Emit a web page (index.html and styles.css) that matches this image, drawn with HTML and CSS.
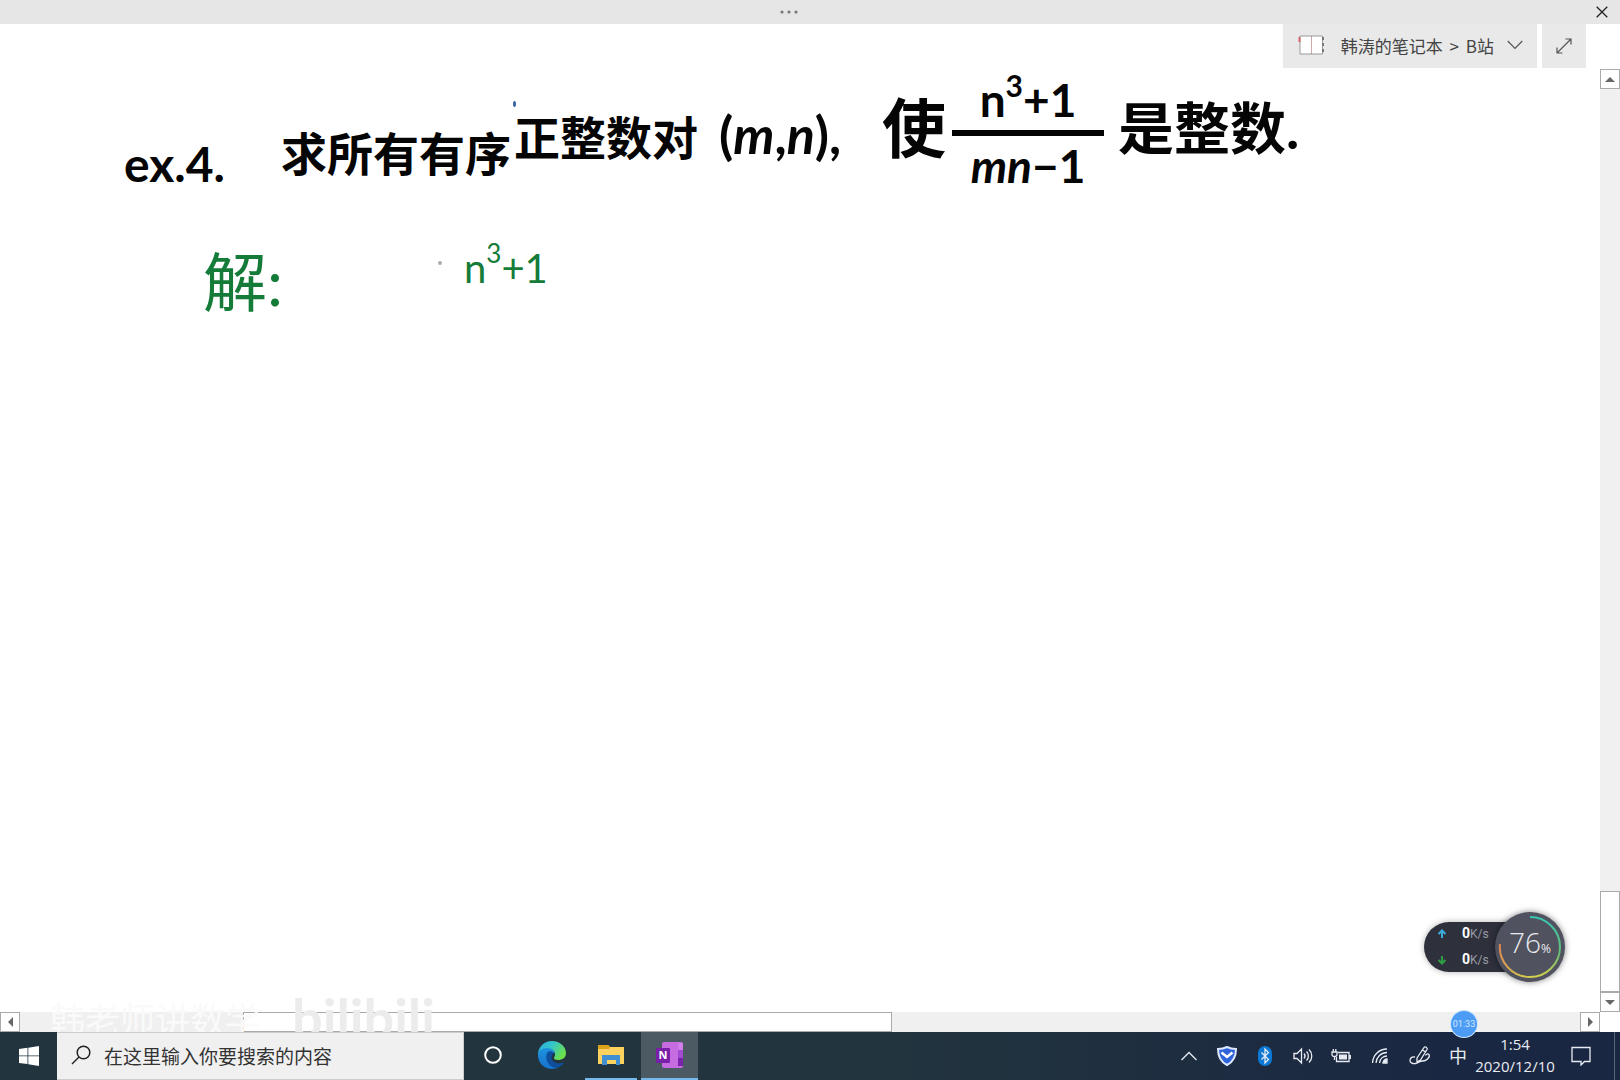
FILE: index.html
```html
<!DOCTYPE html>
<html lang="zh-CN">
<head>
    <meta charset="UTF-8">
    <meta name="viewport" content="width=device-width, initial-scale=1.0">
    <title>B站 - OneNote</title>
    <link rel="stylesheet" href="styles.css">
</head>
<body>
    <header class="titlebar">
        <button class="more" aria-label="更多">
            <svg width="20" height="4" viewBox="0 0 20 4"><circle cx="3" cy="2" r="1.6"/><circle cx="10" cy="2" r="1.6"/><circle cx="17" cy="2" r="1.6"/></svg>
        </button>
        <button class="close" aria-label="关闭">
            <svg width="12" height="12" viewBox="0 0 12 12"><path d="M.7.7l10.6 10.6M11.3.7L.7 11.3"/></svg>
        </button>
    </header>

    <main class="workspace">
        <section class="page">
            <nav class="page-nav">
                <button class="crumbs">
                    <svg class="book" width="28" height="22" viewBox="0 0 28 22">
                        <path d="M2 2h11.500v18H2z M13.500 2h11v18h-11z" fill="#fff" stroke="#999"/>
                        <path d="M1.500 3v5" stroke="#d9666a" stroke-width="2"/>
                        <path d="M13.500 3v16" stroke="#d3a9ac"/>
                        <path d="M25 3v3M25 9v3M25 15v3" stroke="#777" stroke-width="2"/>
                    </svg>
                    <span class="path">韩涛的笔记本 <span class="sep">&gt;</span> B站</span>
                    <svg width="16" height="10" viewBox="0 0 16 10"><path d="M.7 1l7.300 7.500L15.300 1" fill="none" stroke="#555" stroke-width="1.2"/></svg>
                </button>
                <button class="expand" aria-label="全屏">
                    <svg width="16" height="16" viewBox="0 0 16 16"><path d="M1 15L15 1M9.500 1H15v5.500M1 9.500V15h5.500" fill="none" stroke="#555" stroke-width="1.2"/></svg>
                </button>
            </nav>

            <!-- handwriting on the free canvas -->
            <div class="ink label">ex.4.</div>
            <div class="ink find">求所有有序</div>
            <div class="ink pair">正整数对</div>
            <div class="ink tuple">(<i>m</i>,<i>n</i>),</div>
            <div class="ink such">使</div>
            <div class="ink fraction">
                <span class="top">n<sup>3</sup>+1</span>
                <span class="bottom"><i>mn</i>−1</span>
            </div>
            <div class="ink integer">是整数.</div>
            <div class="ink green solve">解:</div>
            <div class="ink green cube">n<sup>3</sup>+1</div>
            <span class="dot blue"></span>
            <span class="dot grey"></span>

            <aside class="monitor">
                <dl class="speeds">
                    <div>
                        <dt><svg width="10" height="10" viewBox="0 0 10 10"><path d="M5 9V2M1.500 5L5 1.500 8.500 5" fill="none" stroke="#3cabdc" stroke-width="2"/></svg></dt>
                        <dd><b>0</b>K/s</dd>
                    </div>
                    <div>
                        <dt><svg width="10" height="10" viewBox="0 0 10 10"><path d="M5 1v7M1.500 5L5 8.500 8.500 5" fill="none" stroke="#2f9e44" stroke-width="2"/></svg></dt>
                        <dd><b>0</b>K/s</dd>
                    </div>
                </dl>
                <div class="gauge">
                    <svg class="ring" viewBox="0 0 70 70">
                        <defs>
                            <linearGradient id="ring" x1="0" y1="0" x2="0" y2="1">
                                <stop offset="0" stop-color="#35c8b4"/>
                                <stop offset=".6" stop-color="#67bd77"/>
                                <stop offset="1" stop-color="#d3cd4d"/>
                            </linearGradient>
                            <linearGradient id="ring-end" x1="0" y1="0" x2="1" y2="1">
                                <stop offset="0" stop-color="#de8451"/>
                                <stop offset="1" stop-color="#d3cd4d"/>
                            </linearGradient>
                        </defs>
                        <path d="M35 5a30 30 0 0 1 0 60" fill="none" stroke="url(#ring)" stroke-width="2"/>
                        <path d="M35 65A30 30 0 0 1 5 32" fill="none" stroke="url(#ring-end)" stroke-width="2"/>
                    </svg>
                    <span>76<small>%</small></span>
                </div>
            </aside>
        </section>

        <div class="scroll-v">
            <button aria-label="向上滚动"><svg width="10" height="5" viewBox="0 0 10 5"><path d="M0 5l5-5 5 5z"/></svg></button>
            <div class="track"><div class="thumb"></div></div>
            <button aria-label="向下滚动"><svg width="10" height="5" viewBox="0 0 10 5"><path d="M0 0h10L5 5z"/></svg></button>
        </div>
        <div class="scroll-h">
            <button aria-label="向左滚动"><svg width="5" height="10" viewBox="0 0 5 10"><path d="M5 0v10L0 5z"/></svg></button>
            <div class="track"><div class="thumb"></div></div>
            <button aria-label="向右滚动"><svg width="5" height="10" viewBox="0 0 5 10"><path d="M0 0l5 5-5 5z"/></svg></button>
            <span class="timer">01:33</span>
            <div class="watermark"><span>韩老师讲数学</span><b>bilibili</b></div>
        </div>
    </main>

    <footer class="taskbar">
        <button class="start" aria-label="开始">
            <svg width="20" height="20" viewBox="0 0 20 20" fill="#fff"><path d="M0 3l8.500-1.200v7.700H0zM9.300 1.700L20 0v9.500H9.300zM0 10.300h8.500V18L0 16.900zM9.300 10.300H20V20L9.300 18.200z"/></svg>
        </button>
        <label class="search">
            <svg width="20" height="20" viewBox="0 0 20 20" fill="none" stroke="#222" stroke-width="1.5"><circle cx="12.500" cy="7.500" r="6.300"/><path d="M8 12L1 19"/></svg>
            <input type="text" placeholder="在这里输入你要搜索的内容" aria-label="搜索">
        </label>
        <div class="apps">
            <button class="app" aria-label="Cortana">
                <svg width="20" height="20" viewBox="0 0 20 20"><circle cx="10" cy="10" r="7.800" fill="none" stroke="#fff" stroke-width="2"/></svg>
            </button>
            <button class="app" aria-label="Edge">
                <svg width="30" height="30" viewBox="0 0 30 30">
                    <defs>
                        <linearGradient id="edge-top" x1="0" y1="0" x2="1" y2=".5"><stop offset="0" stop-color="#2aa8e4"/><stop offset=".5" stop-color="#35c6c8"/><stop offset="1" stop-color="#6be04c"/></linearGradient>
                        <linearGradient id="edge-body" x1="0" y1="0" x2="0" y2="1"><stop offset="0" stop-color="#1e93df"/><stop offset="1" stop-color="#1671cb"/></linearGradient>
                    </defs>
                    <path d="M1 15C1 7 7 1 15 1c8 0 14 6 14 12 0 5-4 7-8 7-3 0-4-1-4-2 0-1 1-1 1-4 0-3-3-5-7-5-5 0-9 3-10 6z" fill="url(#edge-top)"/>
                    <path d="M1 15c0-4 4-7 9-7 5 0 8 3 8 6 0-2-6-2-7 3-1 6 5 11 12 9-2 2-5 3-8 3C7 29 1 23 1 15z" fill="url(#edge-body)"/>
                    <path d="M10.500 12C7 18 11 27 19 28c4-1 7-3 8.500-6-5 3-12 1-13-4 0-2 1-4 2.500-5-2-2-5-2-6.500-1z" fill="#0d4f9c"/>
                </svg>
            </button>
            <button class="app open" aria-label="文件资源管理器">
                <svg width="26" height="22" viewBox="0 0 26 22">
                    <path d="M0 1h10l2 2h14v17H0z" fill="#fbd25f"/>
                    <path d="M0 1h10l2 2-1 2H0z" fill="#dda21b"/>
                    <path d="M4 21V11h18v10h-4v-5h-9v5z" fill="#3f8fd2"/>
                    <path d="M9 16h8v4H9z" fill="#fbd25f"/>
                </svg>
            </button>
            <button class="app open active" aria-label="OneNote">
                <svg width="28" height="26" viewBox="0 0 28 26">
                    <rect x="6" y="0" width="21" height="26" rx="2" fill="#c66be0"/>
                    <path d="M22 1h5v7h-5z" fill="#cf7de8"/><path d="M22 8h5v8h-5z" fill="#a34ad0"/><path d="M22 16h5v8h-5z" fill="#7b22ad"/>
                    <rect x="0" y="6" width="14" height="15" rx="1" fill="#7a1fa8"/>
                    <text class="note-mark" x="7" y="17" text-anchor="middle">N</text>
                </svg>
            </button>
        </div>

        <div class="tray">
            <button aria-label="显示隐藏的图标"><svg width="18" height="10" viewBox="0 0 18 10"><path d="M1.500 9L9 1.500 16.500 9"/></svg></button>
            <button aria-label="安全卫士"><svg width="20" height="20" viewBox="0 0 20 20"><path d="M10 1c3 1.500 6 2 9 2 0 7-3 13-9 16C4 16 1 10 1 3c3 0 6-.5 9-2z" fill="#2f63dc" stroke="#dde8ff" stroke-width="2"/><path d="M4.500 6.500L10 11l5.500-4.500" stroke="#fff" stroke-width="2.500"/></svg></button>
            <button aria-label="蓝牙"><svg width="14" height="20" viewBox="0 0 14 20"><rect width="14" height="20" rx="7" fill="#0c78d4" stroke="none"/><path d="M3.500 6.500l7 7L7 17V3l3.500 3.500-7 7"/></svg></button>
            <button aria-label="音量"><svg width="20" height="18" viewBox="0 0 20 18"><path d="M1 6.500h3L8.500 2v14L4 11.500H1zM11 6.500c1.300 1.500 1.300 3.500 0 5M13.500 4.500c2.500 2.500 2.500 6.500 0 9M16 2.500c3.700 3.500 3.700 9.500 0 13"/></svg></button>
            <button aria-label="电池"><svg width="20" height="16" viewBox="0 0 20 16"><path d="M7 4.500h11v9H5.500V9M19.300 7v4"/><path d="M8 6.500h8v5H8z" fill="#e8ecf2" stroke="none"/><path d="M1 4h5v2.500C6 8 5 8.500 3.500 8.500S1 8 1 6.500zM2.300 4V1M4.800 4V1M3.500 8.500V12"/></svg></button>
            <button class="wide" aria-label="网络"><svg width="18" height="18" viewBox="0 0 18 18"><path d="M1.500 16C2 8 8 2 16 2M5 16c.5-6 5-10.500 11-10.500M8.500 16c.5-4 3.500-7 7.500-7"/><path d="M12 16c0-2 2-4 4-4v4z" fill="#e8ecf2"/></svg></button>
            <button class="wide" aria-label="笔工作区"><svg width="22" height="22" viewBox="0 0 22 22"><path d="M8 13L15 2.500c1-1.500 4 0 3 2L11.500 15 8 17zM13.500 5l3 2M6 12c-3-.5-5 1-5 3.500s3 3.500 5.500 3 4-2.500 7-2.500c4 0 8-4 6.500-6.500-1-1-3-.5-3.500 1"/></svg></button>
            <button class="ime" aria-label="输入法">中</button>
            <button class="clock"><time>1:54</time><span>2020/12/10</span></button>
            <button class="notice" aria-label="通知"><svg width="20" height="20" viewBox="0 0 20 20"><path d="M1 1.500h18v14h-5.500L10 19v-3.500H1z"/></svg></button>
        </div>
    </footer>
</body>
</html>
```
FILE: styles.css
```css
* {
    box-sizing: border-box;
}
body {
    margin: 0;
    height: 100vh;
    display: flex;
    flex-direction: column;
    overflow: hidden;
    background-color: #fff;
    font-family: "Noto Sans CJK SC", sans-serif;
    color: #444;
}
button {
    display: flex;
    align-items: center;
    justify-content: center;
    padding: 0;
    border: none;
    background: none;
    color: inherit;
    font: inherit;
}
svg {
    display: block;
    flex-shrink: 0;
}
.titlebar {
    display: grid;
    grid-template-columns: 36px 1fr 36px;
    height: 24px;
    background-color: #e6e6e6;
}
.more {
    grid-column: 2;
    justify-self: center;
    margin-right: 42px;
    fill: #777;
}
.close {
    stroke: #222;
    stroke-width: 1.3;
}
.workspace {
    flex: 1;
    min-height: 0;
    display: grid;
    grid-template-columns: 1fr 20px;
    grid-template-rows: 1fr 20px;
}
.page {
    position: relative;
}
.page-nav {
    position: absolute;
    top: 0;
    right: 14px;
    display: flex;
    gap: 5px;
    height: 44px;
}
.page-nav button {
    background-color: #e9e9e9;
}
.crumbs {
    padding: 0 14px 2px 15px;
    font-size: 17px;
}
.path {
    margin: 0 13px 0 15px;
}
.sep {
    margin: 0 3px;
}
.book {
    fill: none;
}
.page-nav .expand {
    width: 44px;
}

/* handwriting */
.ink {
    position: absolute;
    color: #050505;
    font-family: Lato, "Noto Sans CJK SC", sans-serif;
    font-weight: 700;
    font-size: 46px;
    line-height: 60px;
    white-space: nowrap;
}
.ink sup {
    font-size: 30px;
    line-height: 0;
    vertical-align: 20px;
}
.label {
    left: 124px;
    top: 110px;
    font-size: 48px;
}
.find {
    left: 281px;
    top: 100px;
}
.pair {
    left: 514px;
    top: 84px;
}
.tuple {
    left: 719px;
    top: 80px;
    font-size: 52px;
}
.such {
    left: 882px;
    top: 74px;
    font-size: 64px;
}
.fraction {
    left: 952px;
    top: 46px;
    width: 152px;
    display: flex;
    flex-direction: column;
    text-align: center;
}
.fraction .top {
    border-bottom: 6px solid #050505;
}
.fraction .bottom {
    line-height: 60px;
}
.integer {
    left: 1118px;
    top: 74px;
    font-size: 56px;
}
.green {
    color: #147c38;
    font-weight: 400;
}
.solve {
    left: 203px;
    top: 228px;
    font-size: 64px;
}
.cube {
    left: 464px;
    top: 214px;
    font-size: 40px;
}
.cube sup {
    font-size: 26px;
}
.dot {
    position: absolute;
    border-radius: 50%;
}
.dot.blue {
    left: 513px;
    top: 77px;
    width: 3px;
    height: 6px;
    background-color: #3a64a8;
}
.dot.grey {
    left: 438px;
    top: 237px;
    width: 4px;
    height: 4px;
    background-color: #aaa;
}

/* network speed widget */
.monitor {
    position: absolute;
    right: 35px;
    bottom: 30px;
    display: flex;
    align-items: center;
}
.speeds {
    width: 90px;
    height: 50px;
    margin: 0 -19px 0 0;
    padding: 0 0 0 13px;
    display: flex;
    flex-direction: column;
    justify-content: center;
    background-color: #2e303c;
    border-radius: 25px 0 0 25px;
    box-shadow: 0 0 6px rgba(0, 0, 0, 0.3);
    color: #9a9ca5;
    font-family: Roboto, sans-serif;
    font-size: 12px;
    line-height: 25px;
}
.speeds div {
    display: flex;
    align-items: center;
    gap: 15px;
}
.speeds dd {
    margin: 0;
}
.speeds b {
    color: #fff;
    font-size: 14px;
}
.gauge {
    position: relative;
    width: 70px;
    height: 70px;
    display: flex;
    align-items: center;
    justify-content: center;
    border-radius: 50%;
    background-color: #50535f;
    box-shadow: 0 0 6px rgba(0, 0, 0, 0.5);
    color: #e8e9ee;
    font-family: "Open Sans", sans-serif;
    font-weight: 300;
    font-size: 28px;
    line-height: 34px;
    padding-bottom: 4px;
}
.gauge small {
    font-size: 12px;
    font-weight: 400;
}
.ring {
    position: absolute;
    inset: 0;
}

/* scrollbars */
.scroll-v {
    display: flex;
    flex-direction: column;
    padding-top: 45px;
}
.scroll-h {
    position: relative;
    display: flex;
}
.scroll-v button, .scroll-h button {
    width: 20px;
    height: 20px;
    border: 1px solid #aaa;
    background-color: #fff;
    fill: #666;
}
.track {
    flex: 1;
    display: flex;
    background-color: #f0f0f0;
}
.thumb {
    border: 1px solid #aaa;
    background-color: #fff;
}
.scroll-v .track {
    flex-direction: column;
    justify-content: flex-end;
}
.scroll-v .thumb {
    height: 11.2%;
}
.scroll-h .thumb {
    width: 41.6%;
    margin-left: 14.3%;
}
.timer {
    position: absolute;
    right: 123px;
    top: -1px;
    width: 26px;
    height: 26px;
    border-radius: 50%;
    background-color: #4c9cf5;
    box-shadow: 0 0 0 1px #cfe4fb;
    color: #d5e8ff;
    font-family: Roboto, sans-serif;
    font-size: 9px;
    line-height: 26px;
    text-align: center;
    z-index: 1;
}
.watermark {
    position: absolute;
    left: 50px;
    bottom: -8px;
    display: flex;
    align-items: flex-end;
    gap: 32px;
    color: #fafafa;
    font-size: 35px;
    line-height: 44px;
    pointer-events: none;
}
.watermark b {
    color: #ececec;
    font-family: Lato, sans-serif;
    font-size: 54px;
}

/* taskbar */
.taskbar {
    display: flex;
    height: 48px;
    position: relative;
    background: linear-gradient(90deg, #22343e 0%, #22343e 55%, #1a2742 90%);
    color: #e8ecf2;
}
.start {
    width: 57px;
}
.search {
    width: 407px;
    display: flex;
    align-items: center;
    gap: 13px;
    padding-left: 14px;
    padding-bottom: 2px;
    background-color: #f0f0f0;
    border: 1px solid #ccc;
    border-left: none;
}
.search input {
    flex: 1;
    min-width: 0;
    padding: 0;
    border: none;
    outline: none;
    background: none;
    font: 19px "Noto Sans CJK SC", sans-serif;
}
.search input::placeholder {
    color: #333;
    opacity: 1;
}
.apps {
    display: flex;
    gap: 2px;
}
.app {
    width: 57px;
    border-bottom: 2px solid transparent;
}
.app.open {
    border-image: linear-gradient(90deg, transparent 5px, #76b9ed 5px, #76b9ed 53px, transparent 53px) 2;
}
.app.active {
    border-image: none;
    border-color: #76b9ed;
    background-color: #4b5a63;
}
.note-mark {
    fill: #fff;
    font: 700 11px "Open Sans", sans-serif;
}
.tray {
    margin-left: auto;
    margin-right: 5px;
    padding-right: 6px;
    display: flex;
    border-right: 1px solid #5a6478;
}
.tray button {
    width: 38px;
}
.tray svg {
    fill: none;
    stroke: #e8ecf2;
    stroke-width: 1.3;
}
.tray .wide {
    width: 40px;
}
.tray .ime {
    width: 36px;
    padding-bottom: 2px;
    font-size: 18px;
}
.tray .clock {
    width: 78px;
    padding-bottom: 2px;
    flex-direction: column;
    font-family: "Open Sans", sans-serif;
    font-size: 15px;
    line-height: 22px;
}
.tray .notice {
    width: 54px;
}
```
